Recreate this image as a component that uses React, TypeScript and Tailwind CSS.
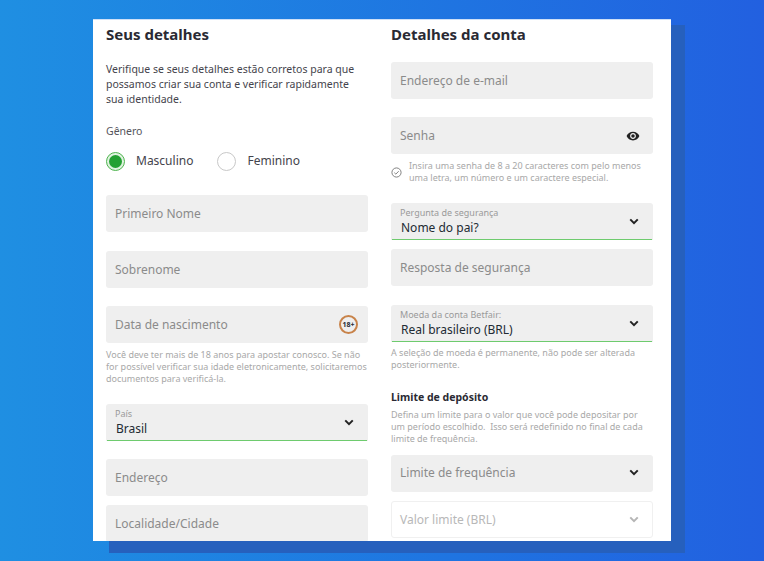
import React from "react";

const font = "font-['Noto_Sans','Open_Sans',sans-serif]";

const Chevron = ({ light }: { light?: boolean }) => (
  <svg
    width="10"
    height="7"
    viewBox="0 0 12 8"
    fill="none"
    stroke={light ? "#b5b5b5" : "#222222"}
    strokeWidth="2.4"
    className="shrink-0"
  >
    <path d="M1.5 1.5 6 6l4.5-4.5" />
  </svg>
);

const Field = ({
  label,
  className,
  children,
}: {
  label: string;
  className?: string;
  children?: React.ReactNode;
}) => (
  <div
    className={`flex h-[37px] items-center justify-between rounded-[3px] bg-[#efefef] pl-[9px] pr-[12px] ${className ?? ""}`}
  >
    <span className="text-[12px] leading-[18px] text-[#8b8b8b]">{label}</span>
    {children}
  </div>
);

const SelectField = ({
  label,
  value,
  className,
}: {
  label: string;
  value: string;
  className?: string;
}) => (
  <div className={`flex h-[37px] flex-col rounded-t-[3px] bg-[#efefef] ${className ?? ""}`}>
    <div className="flex flex-1 justify-between pl-[9px] pr-[14px]">
      <div className="pt-[4px]">
        <div className="text-[9px] leading-[12px] text-[#9a9a9a]">{label}</div>
        <div className="pl-px text-[12px] leading-[17px] text-[#222b33]">{value}</div>
      </div>
      <div className="pt-[15px]">
        <Chevron />
      </div>
    </div>
    <div className="mx-px h-px bg-[#6ecb6e]" />
  </div>
);

const Hint = ({ children, className }: { children: React.ReactNode; className?: string }) => (
  <p className={`text-[9px] leading-[12px] text-[#a8a8a8] ${className ?? ""}`}>{children}</p>
);

const App = () => {
  return (
    <div
      className={`relative h-[561px] w-[764px] overflow-hidden bg-gradient-to-r from-[#1f8fe2] to-[#2260e0] pl-[93px] pt-[19px] ${font}`}
    >
      {/* offset block behind the card */}
      <div className="absolute left-[109px] top-[25px] h-[528px] w-[576px] bg-[#2660bd]" />

      <div className="relative flex h-[522px] w-[578px] gap-[23px] overflow-hidden border-t border-[#cfe0f7] bg-white px-[13px]">
        <div className="w-[262px] shrink-0">
          <h2 className="mt-[4px] text-[15px] font-bold leading-[20px] text-[#2a2a33]">Seus detalhes</h2>
          <p className="mt-[18px] text-[10.5px] leading-[15px] text-[#44444c]">
            Verifique se seus detalhes estão corretos para que possamos criar sua conta e verificar
            rapidamente sua identidade.
          </p>
          <div className="mt-[17px] text-[10.5px] leading-[15px] text-[#55555c]">Gênero</div>
          <div className="mt-[12px] flex h-[20px] items-center text-[12px] text-[#44444c]">
            <span className="flex h-[19px] w-[19px] items-center justify-center rounded-full border border-[#4fb44f] bg-[#dff3df]">
              <span className="h-[13px] w-[13px] rounded-full bg-[#22a032]" />
            </span>
            <span className="ml-[11px]">Masculino</span>
            <span className="ml-[24px] h-[19px] w-[19px] rounded-full border border-[#c8c8c8] bg-white" />
            <span className="ml-[11px]">Feminino</span>
          </div>
          <Field label="Primeiro Nome" className="mt-[24px]" />
          <Field label="Sobrenome" className="mt-[19px]" />
          <Field label="Data de nascimento" className="mt-[18px]">
            <span className="-mr-[2px] flex h-[19px] w-[19px] items-center justify-center rounded-full border-2 border-[#c8834a] text-[7px] font-bold leading-none text-[#2a2a33]">
              18+
            </span>
          </Field>
          <Hint className="mt-[6px]">
            Você deve ter mais de 18 anos para apostar conosco. Se não for possível verificar sua
            idade eletronicamente, solicitaremos documentos para verificá-la.
          </Hint>
          <SelectField label="País" value="Brasil" className="mt-[19px]" />
          <Field label="Endereço" className="mt-[18px] pt-px" />
          <Field label="Localidade/Cidade" className="mt-[9px] pt-px" />
        </div>

        <div className="w-[262px] shrink-0">
          <h2 className="mt-[4px] text-[15px] font-bold leading-[20px] text-[#2a2a33]">Detalhes da conta</h2>
          <Field label="Endereço de e-mail" className="mt-[18px]" />
          <Field label="Senha" className="mt-[18px] pr-[13px]">
            <svg width="14" height="14" viewBox="0 0 24 24" fill="#222222" className="shrink-0">
              <path d="M12 4.5C7 4.5 2.73 7.61 1 12c1.73 4.39 6 7.5 11 7.5s9.27-3.11 11-7.5c-1.73-4.39-6-7.5-11-7.5zM12 17c-2.76 0-5-2.24-5-5s2.24-5 5-5 5 2.24 5 5-2.24 5-5 5zm0-8a3 3 0 1 0 0 6 3 3 0 0 0 0-6z" />
            </svg>
          </Field>
          <div className="mt-[6px] flex items-center gap-[7px]">
            <svg width="11" height="11" viewBox="0 0 12 12" fill="none" stroke="#777777" className="shrink-0">
              <circle cx="6" cy="6" r="5" />
              <path d="M3.6 6.2 5.3 7.8 8.4 4.6" />
            </svg>
            <Hint>Insira uma senha de 8 a 20 caracteres com pelo menos uma letra, um número e um caractere especial.</Hint>
          </div>
          <SelectField label="Pergunta de segurança" value="Nome do pai?" className="mt-[19px]" />
          <Field label="Resposta de segurança" className="mt-[9px]" />
          <SelectField label="Moeda da conta Betfair:" value="Real brasileiro (BRL)" className="mt-[19px]" />
          <Hint className="mt-[5px]">A seleção de moeda é permanente, não pode ser alterada posteriormente.</Hint>
          <h3 className="mt-[19px] text-[10.5px] font-bold leading-[15px] text-[#2a2a33]">Limite de depósito</h3>
          <Hint className="mt-[4px]">
            Defina um limite para o valor que você pode depositar por um período escolhido.&nbsp; Isso
            será redefinido no final de cada limite de frequência.
          </Hint>
          <Field label="Limite de frequência" className="mt-[10px] pb-[2px] pr-[14px]">
            <Chevron />
          </Field>
          <div className="mt-[9px] flex h-[37px] items-center justify-between rounded-[3px] border border-[#f0f0f0] pl-[8px] pr-[13px]">
            <span className="text-[12px] text-[#b8b8b8]">Valor limite (BRL)</span>
            <Chevron light />
          </div>
        </div>
      </div>
    </div>
  );
};

export default App;
